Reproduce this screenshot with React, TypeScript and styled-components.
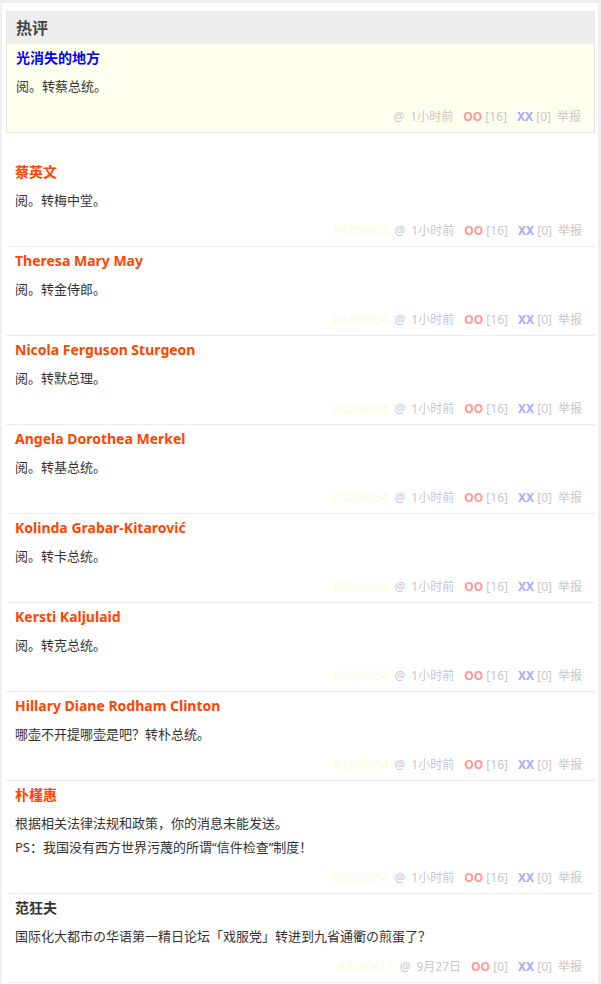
import React from "react";
import styled, { createGlobalStyle } from "styled-components";

const Global = createGlobalStyle`
  html, body { margin: 0; padding: 0; background: #f0f0f0; }
  body { font-family: "Noto Sans", "Noto Sans CJK SC", sans-serif; color: #333; }
`;

const Page = styled.div`
  margin: 3px 3px 0 2px;
  background: #fff;
  padding: 8px 3px 0 4px;
  min-height: 981px;
  box-sizing: border-box;
`;

const HotBox = styled.section`
  border: 1px solid #e6e6e6;
  background: #ffffee;
`;

const HotHeader = styled.h3`
  margin: 0;
  height: 32px;
  line-height: 32px;
  padding: 0 9px;
  background: #eeeeee;
  font-size: 16px;
  font-weight: bold;
  color: #444;
`;

const List = styled.ol<{ $inBox?: boolean }>`
  list-style: none;
  margin: ${(p) => (p.$inBox ? "0" : "25px 0 0")};
  padding: 0;
`;

const Item = styled.li<{ $plain?: boolean }>`
  padding: 4px 13px 5px 9px;
  border-bottom: ${(p) => (p.$plain ? "none" : "1px solid #ececec")};
`;

const Author = styled.div<{ $tone: "red" | "blue" | "plain" }>`
  font-size: 14px;
  line-height: 20px;
  font-weight: bold;
  color: ${(p) => (p.$tone === "red" ? "#ff4500" : p.$tone === "blue" ? "#0000ff" : "#333")};
`;

const Body = styled.div`
  margin-top: 6px;
  font-size: 13px;
  line-height: 24px;
  color: #333;
`;

const Footer = styled.div`
  margin-top: 9px;
  display: flex;
  justify-content: flex-end;
  align-items: baseline;
  font-size: 12px;
  line-height: 20px;
  color: #c8c8c8;
  white-space: pre;
`;

const Id = styled.span<{ $bg: string }>`
  color: ${(p) => p.$bg};
  margin-right: 6px;
`;

const At = styled.span`
  margin-right: 6px;
`;

const Vote = styled.span`
  margin-left: 10px;
`;

const Mark = styled.b<{ $kind: "oo" | "xx" }>`
  font-weight: bold;
  color: ${(p) => (p.$kind === "oo" ? "#ff9999" : "#aaaaff")};
`;

const Report = styled.span`
  margin-left: 6px;
`;

type C = {
  name: string;
  tone: "red" | "blue" | "plain";
  lines: string[];
  id: string;
  time: string;
  oo: number;
  xx: number;
};

const hot: C = {
  name: "光消失的地方",
  tone: "blue",
  lines: ["阅。转蔡总统。"],
  id: "#3200054",
  time: "1小时前",
  oo: 16,
  xx: 0,
};

const mk = (name: string, text: string): C => ({
  name,
  tone: "red",
  lines: [text],
  id: "#3200054",
  time: "1小时前",
  oo: 16,
  xx: 0,
});

const comments: C[] = [
  mk("蔡英文", "阅。转梅中堂。"),
  mk("Theresa Mary May", "阅。转金侍郎。"),
  mk("Nicola Ferguson Sturgeon", "阅。转默总理。"),
  mk("Angela Dorothea Merkel", "阅。转基总统。"),
  mk("Kolinda Grabar-Kitarović", "阅。转卡总统。"),
  mk("Kersti Kaljulaid", "阅。转克总统。"),
  mk("Hillary Diane Rodham Clinton", "哪壶不开提哪壶是吧？转朴总统。"),
  {
    name: "朴槿惠",
    tone: "red",
    lines: ["根据相关法律法规和政策，你的消息未能发送。", "PS：我国没有西方世界污蔑的所谓“信件检查”制度！"],
    id: "#3200054",
    time: "1小时前",
    oo: 16,
    xx: 0,
  },
  {
    name: "范狂夫",
    tone: "plain",
    lines: ["国际化大都市の华语第一精日论坛「戏服党」转进到九省通衢の煎蛋了？"],
    id: "#3200613",
    time: "9月27日",
    oo: 0,
    xx: 0,
  },
];

function Comment({ c, plain, idColor }: { c: C; plain?: boolean; idColor: string }) {
  return (
    <Item $plain={plain}>
      <Author $tone={c.tone}>{c.name}</Author>
      <Body>
        {c.lines.map((l, i) => (
          <div key={i}>{l}</div>
        ))}
      </Body>
      <Footer>
        <Id $bg={idColor}>{c.id}</Id>
        <At>@</At>
        <span>{c.time}</span>
        <Vote>
          <Mark $kind="oo">OO</Mark> [{c.oo}]
        </Vote>
        <Vote>
          <Mark $kind="xx">XX</Mark> [{c.xx}]
        </Vote>
        <Report>举报</Report>
      </Footer>
    </Item>
  );
}

export default function App() {
  return (
    <>
      <Global />
      <Page>
        <HotBox>
          <HotHeader>热评</HotHeader>
          <List as="ul" $inBox>
            <Comment c={hot} plain idColor="#ffffee" />
          </List>
        </HotBox>
        <List>
          {comments.map((c, i) => (
            <Comment key={i} c={c} idColor="#fafadc" />
          ))}
        </List>
      </Page>
    </>
  );
}
